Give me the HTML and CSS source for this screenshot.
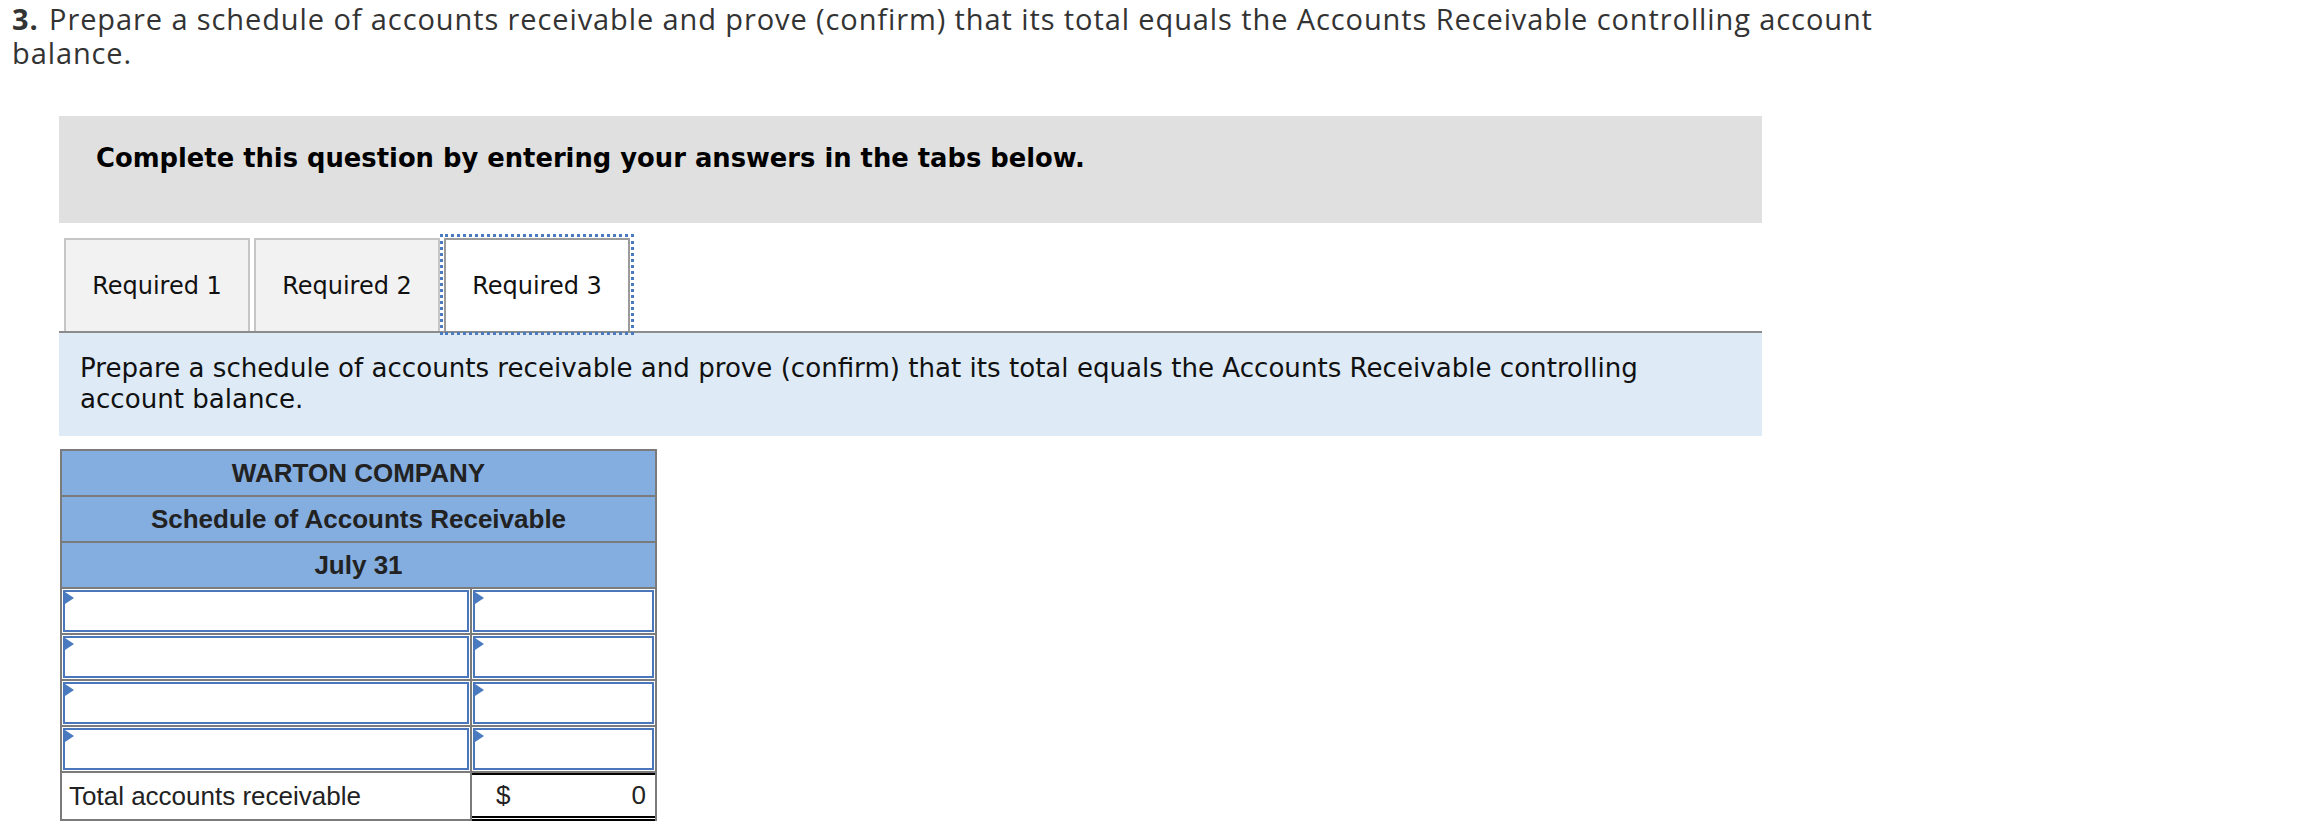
FILE: index.html
```html
<!DOCTYPE html>
<html lang="en">
<head>
  <meta charset="UTF-8">
  <title>Required 3</title>
  <link rel="stylesheet" href="styles.css">
</head>
<body>

<p class="question"><b>3.</b> Prepare a schedule of accounts receivable and prove (confirm) that its total equals the Accounts Receivable controlling account balance.</p>

<div class="work">
  <div class="notice">Complete this question by entering your answers in the tabs below.</div>

  <div class="tabs">
    <button class="tab">Required 1</button>
    <button class="tab">Required 2</button>
    <button class="tab active">Required 3</button>
  </div>

  <div class="instructions">Prepare a schedule of accounts receivable and prove (confirm) that its total equals the Accounts Receivable controlling account balance.</div>

  <table class="schedule">
    <tr><th colspan="2">WARTON COMPANY</th></tr>
    <tr><th colspan="2">Schedule of Accounts Receivable</th></tr>
    <tr><th colspan="2">July 31</th></tr>
    <tr class="line">
      <td class="name"><div class="entry"></div></td>
      <td class="amount"><div class="entry"></div></td>
    </tr>
    <tr class="line">
      <td class="name"><div class="entry"></div></td>
      <td class="amount"><div class="entry"></div></td>
    </tr>
    <tr class="line">
      <td class="name"><div class="entry"></div></td>
      <td class="amount"><div class="entry"></div></td>
    </tr>
    <tr class="line">
      <td class="name"><div class="entry"></div></td>
      <td class="amount"><div class="entry"></div></td>
    </tr>
    <tr class="total">
      <td class="name">Total accounts receivable</td>
      <td class="amount"><div class="sum"><span>$</span><span>0</span></div></td>
    </tr>
  </table>
</div>

</body>
</html>
```

FILE: styles.css
```css
body {
  margin: 0;
  background: #fff;
  color: #222;
}

.question {
  margin: 0;
  padding: 2px 0 0 12px;
  width: 1900px;
  font-family: "Open Sans", Lato, sans-serif;
  font-size: 29px;
  letter-spacing: 0.9px;
  line-height: 34px;
  color: #333;
}
.question b {
  margin-right: 2px;
}

.work {
  margin: 46px 0 0 59px;
  width: 1703px;
}

.notice {
  background: #e0e0e0;
  padding: 24px 37px 47px;
  font-family: "DejaVu Sans", Verdana, sans-serif;
  font-size: 25.8px;
  font-weight: bold;
  line-height: 36px;
  color: #000;
}

.tabs {
  display: flex;
  gap: 4px;
  margin-top: 15px;
  padding-left: 5px;
  border-bottom: 2px solid #8c8c8c;
}
.tab {
  width: 186px;
  height: 93px;
  margin: 0;
  padding: 0;
  background: #f2f2f2;
  border: 2px solid #c6c6c6;
  border-bottom: none;
  font-family: "DejaVu Sans", Verdana, sans-serif;
  font-size: 24px;
  color: #111;
}
.tab.active {
  background: #fff;
  border-color: #9b9b9b;
  outline: 3px dotted #4a7bbf;
  outline-offset: 1px;
}

.instructions {
  background: #deebf7;
  padding: 20px 40px 21px 21px;
  font-family: "DejaVu Sans", Verdana, sans-serif;
  font-size: 26.1px;
  line-height: 31px;
  color: #111;
}

.schedule {
  margin: 13px 0 0 1px;
  width: 597px;
  border: 2px solid #7b7b7b;
  border-bottom: none;
  border-collapse: separate;
  border-spacing: 0;
  font-family: "Liberation Sans", Arial, sans-serif;
  font-size: 26px;
  color: #222;
}
.schedule th {
  height: 44px;
  padding: 0;
  background: #84ade0;
  border-bottom: 2px solid #7b7b7b;
  font-weight: bold;
  vertical-align: middle;
}
.schedule td {
  padding: 1px;
  border-bottom: 2px solid #7b7b7b;
}
.schedule td.name {
  width: 401px;
  border-right: 2px solid #7b7b7b;
}

.entry {
  position: relative;
  height: 38px;
  background: #fff;
  border: 2px solid #4a77bb;
}
.entry::before {
  content: "";
  position: absolute;
  top: 0;
  left: 0;
  border-left: 9px solid #4a7bc0;
  border-top: 6.5px solid transparent;
  border-bottom: 6.5px solid transparent;
}

.total td {
  height: 41px;
}
.total td.name {
  padding: 0 0 0 7px;
}
.total td.amount {
  padding: 0;
  border-top: 2px solid #000;
  border-bottom: 5px double #000;
}
.sum {
  display: flex;
  justify-content: space-between;
  padding: 0 9px 0 24px;
}
```
